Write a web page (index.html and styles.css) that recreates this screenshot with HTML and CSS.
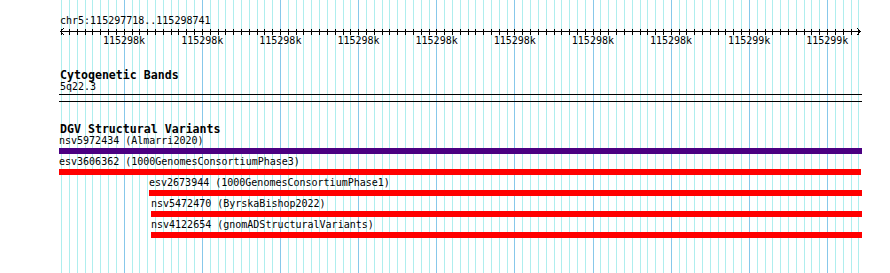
FILE: index.html
```html
<!DOCTYPE html>
<html lang="en">
<head>
  <meta charset="UTF-8">
  <title>DGV Structural Variants</title>
  <link rel="stylesheet" href="styles.css">
</head>
<body>
  <div class="browser">
    <svg class="grid" id="grid" width="890" height="273"></svg>

    <div class="tracks">
      <div class="ruler">
        <div class="locus">chr5:115297718..115298741</div>
        <svg class="scale" id="scale" width="890" height="8">
          <line class="axis" x1="60" y1="4.5" x2="861" y2="4.5"/>
          <polyline class="arrow" points="64,1 60.5,4.5 64,8"/>
          <polyline class="arrow" points="857,1 860.5,4.5 857,8"/>
        </svg>
        <div class="labels">
          <span>115298k</span>
          <span>115298k</span>
          <span>115298k</span>
          <span>115298k</span>
          <span>115298k</span>
          <span>115298k</span>
          <span>115298k</span>
          <span>115298k</span>
          <span>115299k</span>
          <span>115299k</span>
        </div>
      </div>

      <section class="track cyto">
        <h3 class="track-title">Cytogenetic Bands</h3>
        <div class="band-name">5q22.3</div>
        <div class="band-lines"></div>
      </section>

      <section class="track dgv">
        <h3 class="track-title">DGV Structural Variants</h3>
        <div class="feature" style="margin-left: 59px; width: 803px;">
          <div class="feature-label">nsv5972434 (Almarri2020)</div>
          <div class="bar loss-gain"></div>
        </div>
        <div class="feature" style="margin-left: 59px; width: 802px;">
          <div class="feature-label">esv3606362 (1000GenomesConsortiumPhase3)</div>
          <div class="bar loss"></div>
        </div>
        <div class="feature" style="margin-left: 149px; width: 713px;">
          <div class="feature-label">esv2673944 (1000GenomesConsortiumPhase1)</div>
          <div class="bar loss"></div>
        </div>
        <div class="feature" style="margin-left: 151px; width: 711px;">
          <div class="feature-label">nsv5472470 (ByrskaBishop2022)</div>
          <div class="bar loss"></div>
        </div>
        <div class="feature" style="margin-left: 151px; width: 711px;">
          <div class="feature-label">nsv4122654 (gnomADStructuralVariants)</div>
          <div class="bar loss"></div>
        </div>
      </section>
    </div>
  </div>

  <script>
    const SVG_NS = "http://www.w3.org/2000/svg";
    const firstX = 61.2;
    const step = 7.815;
    const grid = document.getElementById("grid");
    const scale = document.getElementById("scale");

    function addLine(parent, x, y1, y2, cls) {
      const line = document.createElementNS(SVG_NS, "line");
      line.setAttribute("x1", x + 0.5);
      line.setAttribute("x2", x + 0.5);
      line.setAttribute("y1", y1);
      line.setAttribute("y2", y2);
      line.setAttribute("class", cls);
      parent.appendChild(line);
    }

    for (let i = 0; i <= 102; i++) {
      const x = Math.round(firstX + i * step);
      addLine(grid, x, 0, 273, i % 10 === 8 ? "major" : "minor");
      addLine(scale, x, 2, 8, "tick");
    }
  </script>
</body>
</html>
```

FILE: styles.css
```css
body {
  margin: 0;
  background-color: #fff;
  color: #000;
  font-family: 'DejaVu Sans Mono', monospace;
  font-size: 10px;
  line-height: 12px;
}
.browser {
  position: relative;
  width: 890px;
  height: 273px;
  overflow: hidden;
}
.grid {
  position: absolute;
  top: 0;
  left: 0;
  shape-rendering: crispEdges;
}
.grid .minor {
  stroke: #afeeee;
  stroke-width: 1;
}
.grid .major {
  stroke: #87c8ea;
  stroke-width: 1;
}
.tracks {
  position: relative;
}
.locus {
  margin-top: 15px;
  padding-left: 60px;
}
.scale {
  display: block;
  shape-rendering: crispEdges;
}
.scale .axis,
.scale .tick {
  stroke: #000;
  stroke-width: 1;
}
.scale .arrow {
  fill: none;
  stroke: #000;
  stroke-width: 1;
  shape-rendering: auto;
}
.labels {
  display: flex;
  padding-left: 85px;
}
.labels span {
  flex: 0 0 78.15px;
  text-align: center;
}
.track-title {
  margin: 0;
  padding-left: 60px;
  font-size: 11.6px;
  font-weight: bold;
  line-height: 12px;
}
.cyto {
  margin-top: 22px;
}
.band-name {
  padding-left: 60px;
}
.band-lines {
  margin: 1px 0 0 59px;
  width: 803px;
  height: 6px;
  border-top: 1px solid #000;
  border-bottom: 1px solid #000;
}
.dgv {
  margin-top: 21px;
}
.feature {
  margin-bottom: 2px;
}
.feature-label {
  white-space: nowrap;
}
.bar {
  height: 6px;
  margin-top: 1px;
}
.loss-gain {
  background-color: #4b0082;
}
.loss {
  background-color: #ff0000;
}
```
